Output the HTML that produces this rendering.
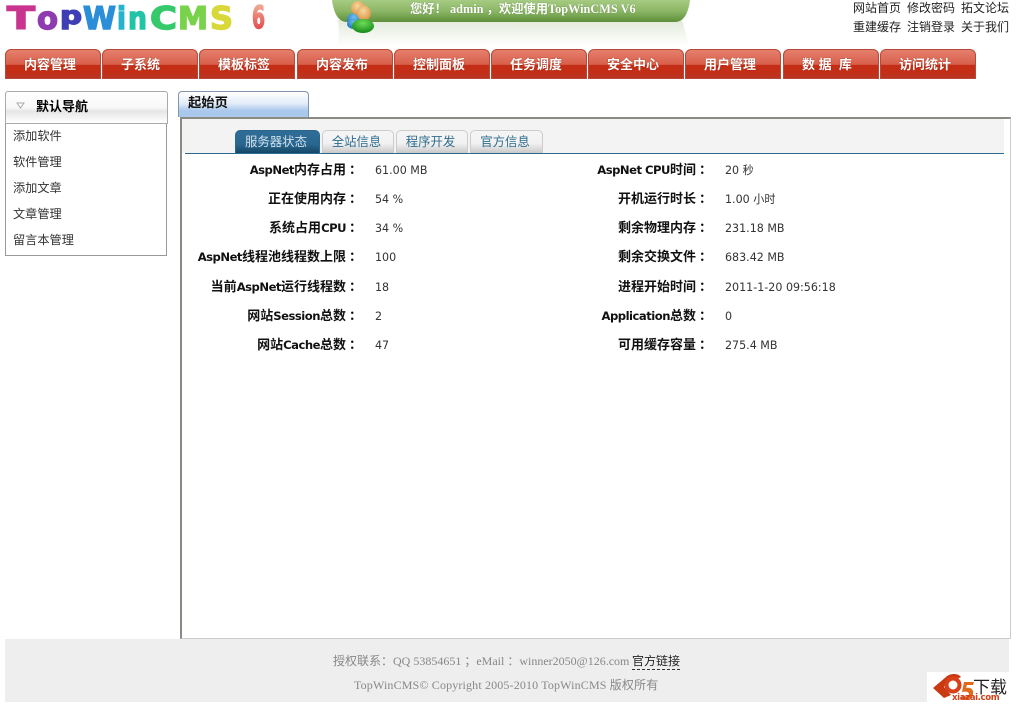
<!DOCTYPE html>
<html lang="zh">
<head>
<meta charset="utf-8">
<title>TopWinCMS</title>
<style>
html,body{margin:0;padding:0;background:#fff}
#p{position:relative;width:1020px;height:708px;overflow:hidden;background:#fff;font:12px/14px "Liberation Sans","WenQuanYi Zen Hei","Noto Sans CJK SC",sans-serif;color:#222}
#p div,#p svg{position:absolute}
.t{white-space:nowrap}
.nav{top:49px;height:30px;box-sizing:border-box;border:1px solid #b8493a;border-radius:6px 6px 0 0;background:linear-gradient(#e47f6c 0,#d85f4a 52%,#c42e16 54%,#c42e16 78%,#b83522 100%);color:#fff;font-weight:bold;text-align:left;padding-left:18px;line-height:29px;font-size:13px;white-space:pre;text-shadow:0 0 1px #7a1a0c}
.sub{top:130px;height:23px;box-sizing:border-box;border:1px solid #ccc;border-bottom:0;border-radius:5px 5px 0 0;background:linear-gradient(#f5f5f5 0,#f2f2f2 55%,#c9c9c9 100%);color:#2f6d8f;text-align:center;line-height:23px;font-size:12.4px;padding-right:3px}
.lb{width:200px;text-align:right;font:bold 13px/14px "WenQuanYi Zen Hei","Noto Sans CJK SC",sans-serif;color:#111;white-space:nowrap;margin-top:-1px}
.lb i{font:bold 11.6px/14px "DejaVu Sans",sans-serif;letter-spacing:-.5px}
.lb em{font-style:normal;position:relative;left:3px}
.v{font:11.1px/14px "DejaVu Sans","WenQuanYi Zen Hei","Noto Sans CJK SC",sans-serif;color:#333;white-space:nowrap;margin-top:1px}
.m{left:13px;color:#333;font-size:12.2px;white-space:nowrap}
</style>
</head>
<body>
<div id="p">

<svg style="left:0;top:0" width="280" height="42" viewBox="0 0 280 42">
<defs>
<linearGradient id="g6" x1="0" y1="0" x2="0" y2="1"><stop offset="0" stop-color="#f0c0a0"/><stop offset="1" stop-color="#e0303a"/></linearGradient>
</defs>
<g font-family="DejaVu Sans" font-weight="bold" font-size="31" stroke-width="1.4" fill="currentColor" stroke="currentColor">
<text x="7" y="29" style="color:#c8348e" textLength="28" lengthAdjust="spacingAndGlyphs">T</text>
<text x="37" y="29" style="color:#8e3bb0" textLength="21" lengthAdjust="spacingAndGlyphs">o</text>
<text x="60" y="24" font-size="25" style="color:#3f3fb5" textLength="22" lengthAdjust="spacingAndGlyphs">p</text>
<text x="83" y="29" style="color:#2a8ed8" textLength="33" lengthAdjust="spacingAndGlyphs">W</text>
<text x="117" y="29" style="color:#25b4cc" textLength="9" lengthAdjust="spacingAndGlyphs">i</text>
<text x="128" y="29" style="color:#22c4a8" textLength="19" lengthAdjust="spacingAndGlyphs">n</text>
<text x="150" y="29" style="color:#35c96c" textLength="27" lengthAdjust="spacingAndGlyphs">C</text>
<text x="178" y="29" style="color:#78d24a" textLength="30" lengthAdjust="spacingAndGlyphs">M</text>
<text x="210" y="29" style="color:#d8d83a" textLength="23" lengthAdjust="spacingAndGlyphs">S</text>
<text x="252" y="28" fill="url(#g6)" stroke="url(#g6)" textLength="13" lengthAdjust="spacingAndGlyphs">6</text>
</g>
</svg>

<svg style="left:325px;top:0" width="380" height="48" viewBox="0 0 380 48">
<defs>
<linearGradient id="gb" x1="0" y1="0" x2="0" y2="1"><stop offset="0" stop-color="#a6cb82"/><stop offset=".5" stop-color="#8cb766"/><stop offset="1" stop-color="#5d8f3a"/></linearGradient>
<linearGradient id="gf" x1="0" y1="0" x2="0" y2="1"><stop offset="0" stop-color="#e2eadb"/><stop offset="1" stop-color="#ffffff"/></linearGradient>
<radialGradient id="go" cx=".45" cy=".35" r=".7"><stop offset="0" stop-color="#f8d8a0"/><stop offset="1" stop-color="#d89040"/></radialGradient>
<radialGradient id="gg" cx=".5" cy=".3" r=".7"><stop offset="0" stop-color="#6fdc58"/><stop offset="1" stop-color="#148a18"/></radialGradient>
<radialGradient id="gbl" cx=".5" cy=".3" r=".7"><stop offset="0" stop-color="#70c0f0"/><stop offset="1" stop-color="#1e70b8"/></radialGradient>
</defs>
<path d="M13 20H357C360 30 362 38 364 46H12C14 38 14 30 13 20Z" fill="url(#gf)"/>
<path d="M7 0H365C364 8 361 22 350 22H22C11 22 8 8 7 0Z" fill="url(#gb)"/>
<ellipse cx="29" cy="20" rx="7" ry="7" fill="url(#gbl)"/>
<ellipse cx="33" cy="8" rx="7" ry="7" fill="url(#go)"/>
<ellipse cx="39" cy="13" rx="7" ry="7.5" fill="url(#go)"/>
<ellipse cx="29" cy="24" rx="7" ry="5" fill="url(#gbl)"/>
<ellipse cx="38" cy="26" rx="11" ry="7" fill="url(#gg)"/>
</svg>

<div class="t" style="left:410px;top:2px;color:#fff;font:bold 12.3px/14px 'Liberation Serif','WenQuanYi Zen Hei','Noto Sans CJK SC',serif;text-shadow:0 0 1px #557a38">您好！ admin ，欢迎使用TopWinCMS V6</div>

<div class="t" style="left:853px;top:1px;color:#222;font-size:12px">网站首页</div>
<div class="t" style="left:907px;top:1px;color:#222;font-size:12px">修改密码</div>
<div class="t" style="left:961px;top:1px;color:#222;font-size:12px">拓文论坛</div>
<div class="t" style="left:853px;top:20px;color:#222;font-size:12px">重建缓存</div>
<div class="t" style="left:907px;top:20px;color:#222;font-size:12px">注销登录</div>
<div class="t" style="left:961px;top:20px;color:#222;font-size:12px">关于我们</div>

<div class="nav" style="left:5px;width:96px">内容管理</div>
<div class="nav" style="left:102px;width:96px">子系统</div>
<div class="nav" style="left:199px;width:96px">模板标签</div>
<div class="nav" style="left:297px;width:96px">内容发布</div>
<div class="nav" style="left:394px;width:96px">控制面板</div>
<div class="nav" style="left:491px;width:96px">任务调度</div>
<div class="nav" style="left:588px;width:96px">安全中心</div>
<div class="nav" style="left:685px;width:96px">用户管理</div>
<div class="nav" style="left:783px;width:96px">数 据  库</div>
<div class="nav" style="left:880px;width:96px">访问统计</div>

<div style="left:5px;top:91px;width:163px;height:33px;box-sizing:border-box;border:1px solid #aaa;border-radius:3px 3px 0 0;background:linear-gradient(#fff 0,#f8f8f8 50%,#e6e6e6 62%,#fff 100%)"></div>
<svg style="left:16px;top:102px" width="10" height="8" viewBox="0 0 10 8"><path d="M1 1H8L4.5 6Z" fill="#fff" stroke="#aaa"/></svg>
<div class="t" style="left:36px;top:100px;font-weight:bold;color:#000;font-size:13px">默认导航</div>
<div style="left:5px;top:124px;width:162px;height:132px;box-sizing:border-box;border:1px solid #999;border-top:0"></div>
<div class="m" style="top:129px">添加软件</div>
<div class="m" style="top:155px">软件管理</div>
<div class="m" style="top:181px">添加文章</div>
<div class="m" style="top:207px">文章管理</div>
<div class="m" style="top:233px">留言本管理</div>

<div style="left:178px;top:91px;width:131px;height:26px;box-sizing:border-box;border:1px solid #7f96ad;border-bottom:0;border-radius:4px 4px 0 0;background:linear-gradient(#fff 0,#e3edf8 45%,#a9c8ec 75%,#a9c8ec 100%)"></div>
<div class="t" style="left:188px;top:96px;font-weight:bold;color:#111;font-size:13.3px">起始页</div>

<div style="left:180px;top:117px;width:831px;height:522px;box-sizing:border-box;border:1px solid #ccc;border-top:2px solid #8a8a82;border-left:2px solid #8a8a82;background:#fff"></div>
<div style="left:182px;top:119px;width:822px;height:34px;background:#f3f3f3"></div>
<div style="left:185px;top:153px;width:819px;height:1px;background:#2c6a90"></div>

<div class="sub" style="left:235px;width:85px;background:linear-gradient(#2f6d97 0,#2a6790 60%,#134666 100%);border-color:#2a6790;color:#cfe0ea">服务器状态</div>
<div class="sub" style="left:322px;width:72px">全站信息</div>
<div class="sub" style="left:396px;width:72px">程序开发</div>
<div class="sub" style="left:470px;width:73px">官方信息</div>

<div class="lb" style="left:159px;top:163px"><i>AspNet</i>内存占用<em>：</em></div><div class="v" style="left:375px;top:163px">61.00 MB</div>
<div class="lb" style="left:159px;top:192px">正在使用内存<em>：</em></div><div class="v" style="left:375px;top:192px">54 %</div>
<div class="lb" style="left:159px;top:221px">系统占用<i>CPU</i><em>：</em></div><div class="v" style="left:375px;top:221px">34 %</div>
<div class="lb" style="left:159px;top:250px"><i>AspNet</i>线程池线程数上限<em>：</em></div><div class="v" style="left:375px;top:250px">100</div>
<div class="lb" style="left:159px;top:280px">当前<i>AspNet</i>运行线程数<em>：</em></div><div class="v" style="left:375px;top:280px">18</div>
<div class="lb" style="left:159px;top:309px">网站<i>Session</i>总数<em>：</em></div><div class="v" style="left:375px;top:309px">2</div>
<div class="lb" style="left:159px;top:338px">网站<i>Cache</i>总数<em>：</em></div><div class="v" style="left:375px;top:338px">47</div>

<div class="lb" style="left:509px;top:163px"><i>AspNet CPU</i>时间<em>：</em></div><div class="v" style="left:725px;top:163px">20 秒</div>
<div class="lb" style="left:509px;top:192px">开机运行时长<em>：</em></div><div class="v" style="left:725px;top:192px">1.00 小时</div>
<div class="lb" style="left:509px;top:221px">剩余物理内存<em>：</em></div><div class="v" style="left:725px;top:221px">231.18 MB</div>
<div class="lb" style="left:509px;top:250px">剩余交换文件<em>：</em></div><div class="v" style="left:725px;top:250px">683.42 MB</div>
<div class="lb" style="left:509px;top:280px">进程开始时间<em>：</em></div><div class="v" style="left:725px;top:280px">2011-1-20 09:56:18</div>
<div class="lb" style="left:509px;top:309px"><i>Application</i>总数<em>：</em></div><div class="v" style="left:725px;top:309px">0</div>
<div class="lb" style="left:509px;top:338px">可用缓存容量<em>：</em></div><div class="v" style="left:725px;top:338px">275.4 MB</div>

<div style="left:5px;top:639px;width:1004px;height:63px;background:#eeeeee"></div>
<div class="t" style="left:333px;top:654px;color:#888;font:12px/14px 'Liberation Serif','WenQuanYi Zen Hei','Noto Sans CJK SC',serif">授权联系：QQ 53854651 ；eMail ：winner2050@126.com</div>
<div class="t" style="left:632px;top:654px;color:#222;font-size:12px;border-bottom:1px dashed #333;padding-bottom:1px">官方链接</div>
<div class="t" style="left:354px;top:678px;color:#888;font:12px/14px 'Liberation Serif','WenQuanYi Zen Hei','Noto Sans CJK SC',serif;letter-spacing:.15px">TopWinCMS© Copyright 2005-2010 TopWinCMS 版权所有</div>

<div style="left:927px;top:672px;width:82px;height:30px;background:#fff"></div>
<svg style="left:930px;top:670px" width="50" height="32" viewBox="0 0 50 32">
<path d="M3 18L16 7C20 3 28 3 31 7L27 9C23 7 20 8 17 11L14 17L21 25L14 28Z" fill="#c93a12"/>
<circle cx="23" cy="15" r="6.5" fill="none" stroke="#d8401a" stroke-width="4"/>
<path d="M34 12H44L43 15H37L36 18C41 17 44 20 43 24C42 29 36 31 30 29L32 26C36 27 39 26 39 24C39 22 36 21 32 22Z" fill="#e06a1c"/>
</svg>
<div class="t" style="left:973px;top:679px;font-size:17px;line-height:17px;color:#222">下载</div>
<div class="t" style="left:952px;top:694px;font:bold 8.6px/9px 'DejaVu Sans',sans-serif;color:#d0401a;letter-spacing:-.4px">xiazai.com</div>

</div>
</body>
</html>
